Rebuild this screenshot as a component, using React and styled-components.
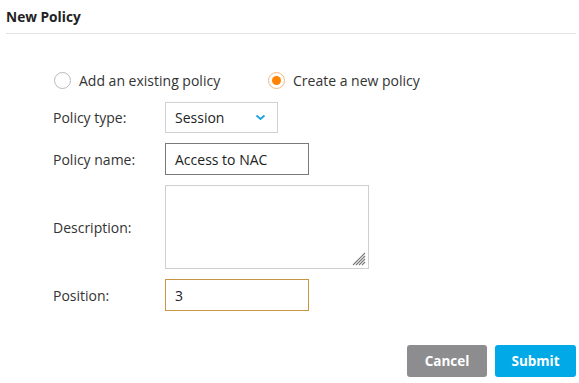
import React from "react";
import styled, { createGlobalStyle } from "styled-components";

const Global = createGlobalStyle`
  html, body { margin: 0; padding: 0; background: #fff; }
  body { font-family: "Open Sans", "Liberation Sans", sans-serif; color: #333; }
  * { box-sizing: border-box; }
`;

const Page = styled.div`
  width: 579px;
  height: 383px;
  display: flex;
  flex-direction: column;
`;

const Header = styled.div`
  margin: 0 3px 0 6px;
  padding: 8px 0 7px;
  border-bottom: 1px solid #e3e3e3;
`;

const Title = styled.h1`
  margin: 0;
  font-size: 13.7px;
  line-height: 18px;
  font-weight: 700;
  color: #222;
`;

const Form = styled.div`
  display: flex;
  flex-direction: column;
  padding: 38px 0 0 53px;
  gap: 10px;
`;

const RadioRow = styled.div`
  display: flex;
  align-items: center;
  padding-left: 1px;
  margin-bottom: 4px;
  height: 16px;
`;

const RadioOption = styled.label`
  display: flex;
  align-items: center;
  gap: 8px;
  font-size: 14px;
  color: #333;
  width: ${(p) => p.$w}px;
`;

const RadioCircle = styled.span`
  width: 17px;
  height: 17px;
  border-radius: 50%;
  border: 1px solid ${(p) => (p.$on ? "#f6b77f" : "#b9b9b9")};
  display: flex;
  align-items: center;
  justify-content: center;
  flex: none;
  &::after {
    content: "";
    display: ${(p) => (p.$on ? "block" : "none")};
    width: 9px;
    height: 9px;
    border-radius: 50%;
    background: #ff8300;
  }
`;

const Row = styled.div`
  display: flex;
  align-items: center;
`;

const Label = styled.div`
  width: 112px;
  font-size: 14px;
  color: #333;
`;

const Select = styled.div`
  width: 113px;
  height: 31px;
  border: 1px solid #d0d0d0;
  display: flex;
  align-items: center;
  justify-content: space-between;
  padding: 0 11px 0 9px;
  font-size: 14px;
  color: #222;
`;

const Input = styled.div`
  width: 144px;
  height: 32px;
  border: 1px solid ${(p) => p.$border};
  display: flex;
  align-items: center;
  padding: 0 9px;
  font-size: 14px;
  color: #222;
`;

const AreaWrap = styled.div`
  position: relative;
  width: 204px;
  height: 84px;
  border: 1px solid #cfcfcf;
`;

const Grip = styled.svg`
  position: absolute;
  right: 2px;
  bottom: 2px;
`;

const Footer = styled.div`
  display: flex;
  justify-content: flex-end;
  gap: 8px;
  padding: 34px 3px 0 0;
`;

const Button = styled.button`
  width: ${(p) => p.$w}px;
  height: 32px;
  border: none;
  border-radius: 3px;
  background: ${(p) => p.$bg};
  color: #fff;
  font-family: "Open Sans", "Liberation Sans", sans-serif;
  font-weight: 700;
  font-size: 13.5px;
  padding: 0;
`;

export default function App() {
  return (
    <Page>
      <Global />
      <Header>
        <Title>New Policy</Title>
      </Header>
      <Form>
        <RadioRow>
          <RadioOption $w={214}>
            <RadioCircle />
            Add an existing policy
          </RadioOption>
          <RadioOption $w={200}>
            <RadioCircle $on />
            Create a new policy
          </RadioOption>
        </RadioRow>
        <Row>
          <Label>Policy type:</Label>
          <Select>
            Session
            <svg width="11" height="7" viewBox="0 0 11 7">
              <path d="M1.5 1.5 L5.5 5 L9.5 1.5" fill="none" stroke="#1ea0dc" strokeWidth="1.8" />
            </svg>
          </Select>
        </Row>
        <Row>
          <Label>Policy name:</Label>
          <Input $border="#7a7a7a">Access to NAC</Input>
        </Row>
        <Row>
          <Label>Description:</Label>
          <AreaWrap>
            <Grip width="14" height="14" viewBox="0 0 14 14">
              <g stroke="#777" strokeWidth="1.1">
                <path d="M13 1 L1 13" />
                <path d="M13 4 L4 13" />
                <path d="M13 7 L7 13" />
                <path d="M13 10 L10 13" />
              </g>
            </Grip>
          </AreaWrap>
        </Row>
        <Row>
          <Label>Position:</Label>
          <Input $border="#c89545">3</Input>
        </Row>
      </Form>
      <Footer>
        <Button $w={80} $bg="#8d8d90">Cancel</Button>
        <Button $w={81} $bg="#02a9e7">Submit</Button>
      </Footer>
    </Page>
  );
}
